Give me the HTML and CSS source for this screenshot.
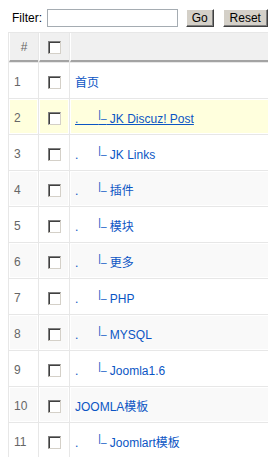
FILE: index.html
```html
<!DOCTYPE html>
<html lang="zh">
  <head>
    <meta charset="utf-8">
    <title>Menu Items</title>
    <link rel="stylesheet" href="styles.css">
  </head>
  <body>
    <form method="post">
      <!-- filter bar -->
      <div class="filter-bar">
        <label for="search">Filter:</label>
        <input type="text" id="search" class="text-input">
        <button type="button" class="btn btn-go">Go</button>
        <button type="button" class="btn btn-reset">Reset</button>
      </div>

      <!-- menu item list -->
      <table class="adminlist">
        <thead>
          <tr>
            <th class="col-num">#</th>
            <th class="col-check"><input type="checkbox" class="check"></th>
            <th class="col-title"></th>
          </tr>
        </thead>
        <tbody>
          <tr class="row0">
            <td>1</td>
            <td class="center"><input type="checkbox" class="check"></td>
            <td><a href="#">首页</a></td>
          </tr>
          <tr class="row1 hover">
            <td>2</td>
            <td class="center"><input type="checkbox" class="check"></td>
            <td><a href="#">.&nbsp;&nbsp;&nbsp;&nbsp;&nbsp;&nbsp;<sup>|_</sup>&nbsp;JK Discuz! Post</a></td>
          </tr>
          <tr class="row0">
            <td>3</td>
            <td class="center"><input type="checkbox" class="check"></td>
            <td><a href="#">.&nbsp;&nbsp;&nbsp;&nbsp;&nbsp;&nbsp;<sup>|_</sup>&nbsp;JK Links</a></td>
          </tr>
          <tr class="row1">
            <td>4</td>
            <td class="center"><input type="checkbox" class="check"></td>
            <td><a href="#">.&nbsp;&nbsp;&nbsp;&nbsp;&nbsp;&nbsp;<sup>|_</sup>&nbsp;插件</a></td>
          </tr>
          <tr class="row0">
            <td>5</td>
            <td class="center"><input type="checkbox" class="check"></td>
            <td><a href="#">.&nbsp;&nbsp;&nbsp;&nbsp;&nbsp;&nbsp;<sup>|_</sup>&nbsp;模块</a></td>
          </tr>
          <tr class="row1">
            <td>6</td>
            <td class="center"><input type="checkbox" class="check"></td>
            <td><a href="#">.&nbsp;&nbsp;&nbsp;&nbsp;&nbsp;&nbsp;<sup>|_</sup>&nbsp;更多</a></td>
          </tr>
          <tr class="row0">
            <td>7</td>
            <td class="center"><input type="checkbox" class="check"></td>
            <td><a href="#">.&nbsp;&nbsp;&nbsp;&nbsp;&nbsp;&nbsp;<sup>|_</sup>&nbsp;PHP</a></td>
          </tr>
          <tr class="row1">
            <td>8</td>
            <td class="center"><input type="checkbox" class="check"></td>
            <td><a href="#">.&nbsp;&nbsp;&nbsp;&nbsp;&nbsp;&nbsp;<sup>|_</sup>&nbsp;MYSQL</a></td>
          </tr>
          <tr class="row0">
            <td>9</td>
            <td class="center"><input type="checkbox" class="check"></td>
            <td><a href="#">.&nbsp;&nbsp;&nbsp;&nbsp;&nbsp;&nbsp;<sup>|_</sup>&nbsp;Joomla1.6</a></td>
          </tr>
          <tr class="row1">
            <td>10</td>
            <td class="center"><input type="checkbox" class="check"></td>
            <td><a href="#">JOOMLA模板</a></td>
          </tr>
          <tr class="row0">
            <td>11</td>
            <td class="center"><input type="checkbox" class="check"></td>
            <td><a href="#">.&nbsp;&nbsp;&nbsp;&nbsp;&nbsp;&nbsp;<sup>|_</sup>&nbsp;Joomlart模板</a></td>
          </tr>
        </tbody>
      </table>
    </form>
  </body>
</html>
```

FILE: styles.css
```css
/* page */
html, body {
    overflow: hidden;
}

body {
    margin: 8px;
    background: #ffffff;
    font-family: "Liberation Sans", Arial, "Noto Sans CJK SC", sans-serif;
    font-size: 12px;
    color: #000000;
}

/* filter bar */
.filter-bar {
    display: flex;
    align-items: center;
    height: 18px;
    margin-top: 1px;
    padding-left: 4px;
}

.filter-bar label {
    margin-right: 5px;
}

.text-input {
    box-sizing: border-box;
    width: 131px;
    height: 18px;
    margin: 0;
    padding: 0 2px;
    border: 1px solid #a5acb2;
    font-family: inherit;
    font-size: 12px;
}

.btn {
    box-sizing: border-box;
    height: 18px;
    margin: 0;
    padding: 0;
    background-color: #d4d0c8;
    border: 1px solid;
    border-color: #ffffff #404040 #404040 #ffffff;
    box-shadow: inset -1px -1px 0 #808080;
    font-family: inherit;
    font-size: 12px;
    color: #000000;
    line-height: 14px;
}

.btn-go {
    width: 29px;
    margin-left: 8px;
}

.btn-reset {
    width: 48px;
    margin-left: 9px;
}

/* list table */
.adminlist {
    width: 100%;
    min-width: 330px;
    margin-top: 5px;
    border-spacing: 1px;
    background-color: #e7e7e7;
    color: #666666;
}

.adminlist th {
    padding: 7px 4px 6px;
    background: #f0f0f0;
    border-left: 1px solid #ffffff;
    border-bottom: 2px solid #a3a3a3;
    font-weight: normal;
    line-height: 14px;
    text-align: center;
    color: #666666;
}

.adminlist th.col-num {
    width: 20px;
}

.adminlist th.col-check {
    width: 21px;
}

.adminlist tbody tr {
    height: 35px;
}

.adminlist td {
    padding: 5px 4px 3px;
    background: #ffffff;
    border: 1px solid #ffffff;
}

.adminlist tr.row1 td {
    background: #f9f9f9;
}

.adminlist tr.hover td {
    background: #ffffdd;
}

.adminlist td.center {
    text-align: center;
}

.adminlist a {
    color: #0b55c4;
    text-decoration: none;
}

.adminlist tr.hover a {
    text-decoration: underline;
}

/* old style square checkbox */
.check {
    appearance: none;
    -webkit-appearance: none;
    box-sizing: border-box;
    display: inline-block;
    width: 13px;
    height: 13px;
    margin: 0;
    vertical-align: middle;
    background: #ffffff;
    border: 1px solid;
    border-color: #808080 #d4d0c8 #d4d0c8 #808080;
    box-shadow: inset 1px 1px 0 #404040;
}
```
